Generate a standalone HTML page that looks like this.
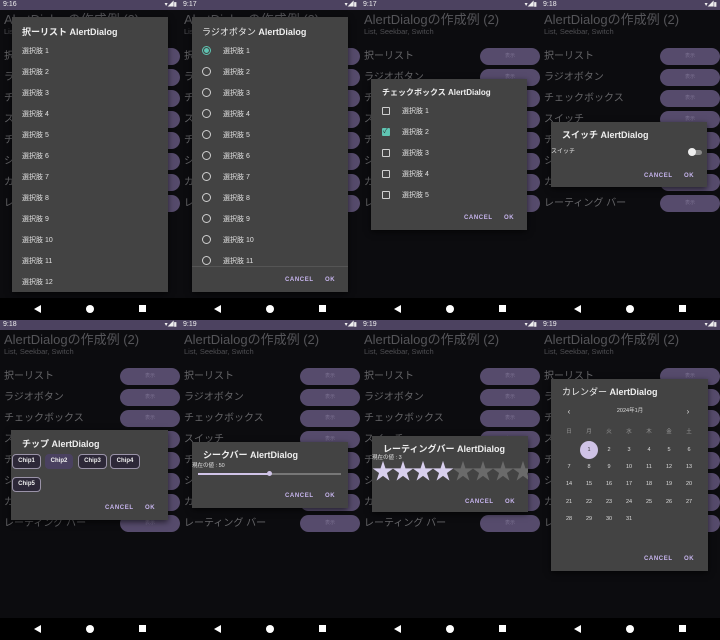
<!DOCTYPE html>
<html><head><meta charset="utf-8"><style>
*{margin:0;padding:0;box-sizing:border-box}
body{width:720px;height:640px;background:#000;position:relative;overflow:hidden;font-family:"Liberation Sans","Noto Sans CJK JP",sans-serif;color:#e6e6e6}
.p{position:absolute;width:180px;height:320px;background:#0c0c0f;overflow:hidden}
.st{position:absolute;left:0;top:0;width:180px;height:10px;background:#4c4260;font-size:7px;color:#eee;line-height:10px;padding-left:3px}
.st i{position:absolute;right:3px;top:0;font-style:normal;font-size:6px}
.nv{position:absolute;left:0;bottom:0;width:180px;height:22px;background:#000}
.nv .tri{position:absolute;left:34px;top:7px;width:0;height:0;border-top:4px solid transparent;border-bottom:4px solid transparent;border-right:7px solid #fff}
.nv .cir{position:absolute;left:86px;top:7px;width:8px;height:8px;border-radius:50%;background:#fff}
.nv .sq{position:absolute;left:139px;top:7px;width:7px;height:7px;background:#fff}
.t1{position:absolute;left:4px;top:12px;font-size:13px;line-height:15px;color:#555559;white-space:nowrap}
.t2{position:absolute;left:4px;top:27px;font-size:7.5px;line-height:9px;color:#4e4e52;white-space:nowrap}
.r{position:absolute;left:4px;font-size:10px;color:#666669;white-space:nowrap;width:176px;height:17px;line-height:17px}
.r b{position:absolute;left:116px;top:0;width:60px;height:17px;border-radius:9px;background:#564b6c;font-weight:normal;font-size:5px;color:#7a7090;text-align:center}
.d{position:absolute;background:#434343;box-shadow:0 2px 6px rgba(0,0,0,.6)}
.dt{position:absolute;font-size:9px;line-height:11px;font-weight:bold;color:#eee;white-space:nowrap}
.it{position:absolute;font-size:7px;line-height:9px;color:#e0e0e0;white-space:nowrap}
.btn{position:absolute;font-size:6px;line-height:8px;font-weight:bold;color:#c7b5ee;letter-spacing:.6px}
.rad{position:absolute;width:9px;height:9px;border:1.3px solid #cfcfcf;border-radius:50%}
.cb{position:absolute;width:8px;height:8px;border:1.3px solid #cfcfcf;border-radius:1px}
.chip{position:absolute;height:15px;border:1px solid #9a93a8;border-radius:4px;font-size:6px;font-weight:bold;color:#eee;line-height:13px;text-align:center;background:#2d2838}
.cal{position:absolute;font-size:5.5px;line-height:7px;color:#ddd;width:14px;text-align:center}
</style></head><body>

<!-- Panel 1 -->
<div class="p" style="left:0;top:0">
<div class="st">9:16<i>▾◢▮</i></div>
<div class="t1">AlertDialogの作成例 (2)</div><div class="t2">List, Seekbar, Switch</div>
<div class="r" style="top:48px">択ーリスト<b>表示</b></div>
<div class="r" style="top:69px">ラジオボタン<b>表示</b></div>
<div class="r" style="top:90px">チェックボックス<b>表示</b></div>
<div class="r" style="top:111px">スイッチ<b>表示</b></div>
<div class="r" style="top:132px">チップ<b>表示</b></div>
<div class="r" style="top:153px">シークバー<b>表示</b></div>
<div class="r" style="top:174px">カレンダー<b>表示</b></div>
<div class="r" style="top:195px">レーティング バー<b>表示</b></div>
<div class="d" style="left:12px;top:17px;width:156px;height:275px">
<div class="dt" style="left:10px;top:10px">択ーリスト AlertDialog</div>
<div class="it" style="left:10px;top:30px">選択肢 1</div>
<div class="it" style="left:10px;top:51px">選択肢 2</div>
<div class="it" style="left:10px;top:72px">選択肢 3</div>
<div class="it" style="left:10px;top:93px">選択肢 4</div>
<div class="it" style="left:10px;top:114px">選択肢 5</div>
<div class="it" style="left:10px;top:135px">選択肢 6</div>
<div class="it" style="left:10px;top:156px">選択肢 7</div>
<div class="it" style="left:10px;top:177px">選択肢 8</div>
<div class="it" style="left:10px;top:198px">選択肢 9</div>
<div class="it" style="left:10px;top:219px">選択肢 10</div>
<div class="it" style="left:10px;top:240px">選択肢 11</div>
<div class="it" style="left:10px;top:261px">選択肢 12</div>
</div>
<div class="nv"><div class="tri"></div><div class="cir"></div><div class="sq"></div></div>
</div>

<!-- Panel 2 -->
<div class="p" style="left:180px;top:0">
<div class="st">9:17<i>▾◢▮</i></div>
<div class="t1">AlertDialogの作成例 (2)</div><div class="t2">List, Seekbar, Switch</div>
<div class="r" style="top:48px">択ーリスト<b>表示</b></div>
<div class="r" style="top:69px">ラジオボタン<b>表示</b></div>
<div class="r" style="top:90px">チェックボックス<b>表示</b></div>
<div class="r" style="top:111px">スイッチ<b>表示</b></div>
<div class="r" style="top:132px">チップ<b>表示</b></div>
<div class="r" style="top:153px">シークバー<b>表示</b></div>
<div class="r" style="top:174px">カレンダー<b>表示</b></div>
<div class="r" style="top:195px">レーティング バー<b>表示</b></div>
<div class="d" style="left:12px;top:17px;width:156px;height:275px">
<div class="dt" style="left:10px;top:10px;font-weight:normal">ラジオボタン <b>AlertDialog</b></div>
<div class="rad" style="left:10px;top:29px;border-color:#5fc4b2;background:radial-gradient(circle,#5fc4b2 0 2.2px,transparent 2.6px)"></div><div class="it" style="left:31px;top:30px">選択肢 1</div>
<div class="rad" style="left:10px;top:50px"></div><div class="it" style="left:31px;top:51px">選択肢 2</div>
<div class="rad" style="left:10px;top:71px"></div><div class="it" style="left:31px;top:72px">選択肢 3</div>
<div class="rad" style="left:10px;top:92px"></div><div class="it" style="left:31px;top:93px">選択肢 4</div>
<div class="rad" style="left:10px;top:113px"></div><div class="it" style="left:31px;top:114px">選択肢 5</div>
<div class="rad" style="left:10px;top:134px"></div><div class="it" style="left:31px;top:135px">選択肢 6</div>
<div class="rad" style="left:10px;top:155px"></div><div class="it" style="left:31px;top:156px">選択肢 7</div>
<div class="rad" style="left:10px;top:176px"></div><div class="it" style="left:31px;top:177px">選択肢 8</div>
<div class="rad" style="left:10px;top:197px"></div><div class="it" style="left:31px;top:198px">選択肢 9</div>
<div class="rad" style="left:10px;top:218px"></div><div class="it" style="left:31px;top:219px">選択肢 10</div>
<div class="rad" style="left:10px;top:239px"></div><div class="it" style="left:31px;top:240px">選択肢 11</div>
<div style="position:absolute;left:0;top:249px;width:156px;height:1px;background:#555"></div>
<div class="btn" style="left:93px;top:259px">CANCEL</div><div class="btn" style="left:133px;top:259px">OK</div>
</div>
<div class="nv"><div class="tri"></div><div class="cir"></div><div class="sq"></div></div>
</div>

<!-- Panel 3 -->
<div class="p" style="left:360px;top:0">
<div class="st">9:17<i>▾◢▮</i></div>
<div class="t1">AlertDialogの作成例 (2)</div><div class="t2">List, Seekbar, Switch</div>
<div class="r" style="top:48px">択ーリスト<b>表示</b></div>
<div class="r" style="top:69px">ラジオボタン<b>表示</b></div>
<div class="r" style="top:90px">チェックボックス<b>表示</b></div>
<div class="r" style="top:111px">スイッチ<b>表示</b></div>
<div class="r" style="top:132px">チップ<b>表示</b></div>
<div class="r" style="top:153px">シークバー<b>表示</b></div>
<div class="r" style="top:174px">カレンダー<b>表示</b></div>
<div class="r" style="top:195px">レーティング バー<b>表示</b></div>
<div class="d" style="left:11px;top:79px;width:156px;height:151px">
<div class="dt" style="left:11px;top:8px;font-size:8px">チェックボックス AlertDialog</div>
<div class="cb" style="left:11px;top:28px"></div><div class="it" style="left:31px;top:28px">選択肢 1</div>
<div class="cb" style="left:11px;top:49px;background:#5fc4b2;border-color:#5fc4b2;font-size:7px;line-height:6px;color:#333">✓</div><div class="it" style="left:31px;top:49px">選択肢 2</div>
<div class="cb" style="left:11px;top:70px"></div><div class="it" style="left:31px;top:70px">選択肢 3</div>
<div class="cb" style="left:11px;top:91px"></div><div class="it" style="left:31px;top:91px">選択肢 4</div>
<div class="cb" style="left:11px;top:112px"></div><div class="it" style="left:31px;top:112px">選択肢 5</div>
<div class="btn" style="left:93px;top:135px">CANCEL</div><div class="btn" style="left:133px;top:135px">OK</div>
</div>
<div class="nv"><div class="tri"></div><div class="cir"></div><div class="sq"></div></div>
</div>

<!-- Panel 4 -->
<div class="p" style="left:540px;top:0">
<div class="st">9:18<i>▾◢▮</i></div>
<div class="t1">AlertDialogの作成例 (2)</div><div class="t2">List, Seekbar, Switch</div>
<div class="r" style="top:48px">択ーリスト<b>表示</b></div>
<div class="r" style="top:69px">ラジオボタン<b>表示</b></div>
<div class="r" style="top:90px">チェックボックス<b>表示</b></div>
<div class="r" style="top:111px">スイッチ<b>表示</b></div>
<div class="r" style="top:132px">チップ<b>表示</b></div>
<div class="r" style="top:153px">シークバー<b>表示</b></div>
<div class="r" style="top:174px">カレンダー<b>表示</b></div>
<div class="r" style="top:195px">レーティング バー<b>表示</b></div>
<div class="d" style="left:11px;top:122px;width:156px;height:65px">
<div class="dt" style="left:11px;top:8px">スイッチ AlertDialog</div>
<div class="it" style="left:0;top:26px;font-size:6px">スイッチ</div>
<div style="position:absolute;left:138px;top:28px;width:13px;height:5px;border-radius:3px;background:#8a8a8a"></div>
<div style="position:absolute;left:137px;top:26px;width:8px;height:8px;border-radius:50%;background:#eee"></div>
<div class="btn" style="left:93px;top:50px">CANCEL</div><div class="btn" style="left:133px;top:50px">OK</div>
</div>
<div class="nv"><div class="tri"></div><div class="cir"></div><div class="sq"></div></div>
</div>

<!-- Panel 5 -->
<div class="p" style="left:0;top:320px">
<div class="st">9:18<i>▾◢▮</i></div>
<div class="t1">AlertDialogの作成例 (2)</div><div class="t2">List, Seekbar, Switch</div>
<div class="r" style="top:48px">択ーリスト<b>表示</b></div>
<div class="r" style="top:69px">ラジオボタン<b>表示</b></div>
<div class="r" style="top:90px">チェックボックス<b>表示</b></div>
<div class="r" style="top:111px">スイッチ<b>表示</b></div>
<div class="r" style="top:132px">チップ<b>表示</b></div>
<div class="r" style="top:153px">シークバー<b>表示</b></div>
<div class="r" style="top:174px">カレンダー<b>表示</b></div>
<div class="r" style="top:195px">レーティング バー<b>表示</b></div>
<div class="d" style="left:11px;top:110px;width:157px;height:90px">
<div class="dt" style="left:11px;top:9px">チップ AlertDialog</div>
<div class="chip" style="left:1px;top:24px;width:29px">Chip1</div>
<div class="chip" style="left:34px;top:24px;width:28px;background:#4a4160;border-color:#4a4160">Chip2</div>
<div class="chip" style="left:67px;top:24px;width:29px">Chip3</div>
<div class="chip" style="left:99px;top:24px;width:30px">Chip4</div>
<div class="chip" style="left:1px;top:47px;width:29px">Chip5</div>
<div class="btn" style="left:94px;top:74px">CANCEL</div><div class="btn" style="left:134px;top:74px">OK</div>
</div>
<div class="nv"><div class="tri"></div><div class="cir"></div><div class="sq"></div></div>
</div>

<!-- Panel 6 -->
<div class="p" style="left:180px;top:320px">
<div class="st">9:19<i>▾◢▮</i></div>
<div class="t1">AlertDialogの作成例 (2)</div><div class="t2">List, Seekbar, Switch</div>
<div class="r" style="top:48px">択ーリスト<b>表示</b></div>
<div class="r" style="top:69px">ラジオボタン<b>表示</b></div>
<div class="r" style="top:90px">チェックボックス<b>表示</b></div>
<div class="r" style="top:111px">スイッチ<b>表示</b></div>
<div class="r" style="top:132px">チップ<b>表示</b></div>
<div class="r" style="top:153px">シークバー<b>表示</b></div>
<div class="r" style="top:174px">カレンダー<b>表示</b></div>
<div class="r" style="top:195px">レーティング バー<b>表示</b></div>
<div class="d" style="left:12px;top:122px;width:156px;height:66px">
<div class="dt" style="left:11px;top:8px">シークバー AlertDialog</div>
<div class="it" style="left:0;top:20px;font-size:5.5px">現在の値 : 50</div>
<div style="position:absolute;left:6px;top:31px;width:143px;height:1.5px;background:#777"></div>
<div style="position:absolute;left:6px;top:31px;width:72px;height:1.5px;background:#d0c4e8"></div>
<div style="position:absolute;left:75px;top:29px;width:5px;height:5px;border-radius:50%;background:#d0c4e8"></div>
<div class="btn" style="left:93px;top:50px">CANCEL</div><div class="btn" style="left:133px;top:50px">OK</div>
</div>
<div class="nv"><div class="tri"></div><div class="cir"></div><div class="sq"></div></div>
</div>

<!-- Panel 7 -->
<div class="p" style="left:360px;top:320px">
<div class="st">9:19<i>▾◢▮</i></div>
<div class="t1">AlertDialogの作成例 (2)</div><div class="t2">List, Seekbar, Switch</div>
<div class="r" style="top:48px">択ーリスト<b>表示</b></div>
<div class="r" style="top:69px">ラジオボタン<b>表示</b></div>
<div class="r" style="top:90px">チェックボックス<b>表示</b></div>
<div class="r" style="top:111px">スイッチ<b>表示</b></div>
<div class="r" style="top:132px">チップ<b>表示</b></div>
<div class="r" style="top:153px">シークバー<b>表示</b></div>
<div class="r" style="top:174px">カレンダー<b>表示</b></div>
<div class="r" style="top:195px">レーティング バー<b>表示</b></div>
<div class="d" style="left:12px;top:116px;width:156px;height:76px;overflow:hidden">
<div class="dt" style="left:11px;top:8px">レーティングバー AlertDialog</div>
<div class="it" style="left:0;top:18px;font-size:5.5px">現在の値 : 3</div>
<div style="position:absolute;left:0;top:25px;font-size:22px;letter-spacing:-2px;white-space:nowrap;color:#d8cfee;line-height:22px">★★★★<span style="color:#6a6a6a">★★★★</span></div>
<div class="btn" style="left:93px;top:62px">CANCEL</div><div class="btn" style="left:133px;top:62px">OK</div>
</div>
<div class="nv"><div class="tri"></div><div class="cir"></div><div class="sq"></div></div>
</div>

<!-- Panel 8 -->
<div class="p" style="left:540px;top:320px">
<div class="st">9:19<i>▾◢▮</i></div>
<div class="t1">AlertDialogの作成例 (2)</div><div class="t2">List, Seekbar, Switch</div>
<div class="r" style="top:48px">択ーリスト<b>表示</b></div>
<div class="r" style="top:69px">ラジオボタン<b>表示</b></div>
<div class="r" style="top:90px">チェックボックス<b>表示</b></div>
<div class="r" style="top:111px">スイッチ<b>表示</b></div>
<div class="r" style="top:132px">チップ<b>表示</b></div>
<div class="r" style="top:153px">シークバー<b>表示</b></div>
<div class="r" style="top:174px">カレンダー<b>表示</b></div>
<div class="r" style="top:195px">レーティング バー<b>表示</b></div>
<div class="d" style="left:11px;top:59px;width:157px;height:192px">
<div class="dt" style="left:11px;top:8px;font-weight:normal">カレンダー <b>AlertDialog</b></div>
<div class="cal" style="left:11px;top:28px;font-size:8px;line-height:9px">‹</div>
<div class="cal" style="left:61px;top:29px;width:36px">2024年1月</div>
<div class="cal" style="left:130px;top:28px;font-size:8px;line-height:9px">›</div>
<div class="cal" style="left:11px;top:50px;color:#999">日</div><div class="cal" style="left:31px;top:50px;color:#999">月</div><div class="cal" style="left:51px;top:50px;color:#999">火</div><div class="cal" style="left:71px;top:50px;color:#999">水</div><div class="cal" style="left:91px;top:50px;color:#999">木</div><div class="cal" style="left:111px;top:50px;color:#999">金</div><div class="cal" style="left:131px;top:50px;color:#999">土</div>
<div style="position:absolute;left:29px;top:62px;width:18px;height:18px;border-radius:50%;background:#cfc3e6"></div>
<div class="cal" style="left:31px;top:68px;color:#333">1</div><div class="cal" style="left:51px;top:68px">2</div><div class="cal" style="left:71px;top:68px">3</div><div class="cal" style="left:91px;top:68px">4</div><div class="cal" style="left:111px;top:68px">5</div><div class="cal" style="left:131px;top:68px">6</div>
<div class="cal" style="left:11px;top:85px">7</div><div class="cal" style="left:31px;top:85px">8</div><div class="cal" style="left:51px;top:85px">9</div><div class="cal" style="left:71px;top:85px">10</div><div class="cal" style="left:91px;top:85px">11</div><div class="cal" style="left:111px;top:85px">12</div><div class="cal" style="left:131px;top:85px">13</div>
<div class="cal" style="left:11px;top:102px">14</div><div class="cal" style="left:31px;top:102px">15</div><div class="cal" style="left:51px;top:102px">16</div><div class="cal" style="left:71px;top:102px">17</div><div class="cal" style="left:91px;top:102px">18</div><div class="cal" style="left:111px;top:102px">19</div><div class="cal" style="left:131px;top:102px">20</div>
<div class="cal" style="left:11px;top:120px">21</div><div class="cal" style="left:31px;top:120px">22</div><div class="cal" style="left:51px;top:120px">23</div><div class="cal" style="left:71px;top:120px">24</div><div class="cal" style="left:91px;top:120px">25</div><div class="cal" style="left:111px;top:120px">26</div><div class="cal" style="left:131px;top:120px">27</div>
<div class="cal" style="left:11px;top:137px">28</div><div class="cal" style="left:31px;top:137px">29</div><div class="cal" style="left:51px;top:137px">30</div><div class="cal" style="left:71px;top:137px">31</div>
<div class="btn" style="left:93px;top:176px">CANCEL</div><div class="btn" style="left:133px;top:176px">OK</div>
</div>
<div class="nv"><div class="tri"></div><div class="cir"></div><div class="sq"></div></div>
</div>

</body></html>
